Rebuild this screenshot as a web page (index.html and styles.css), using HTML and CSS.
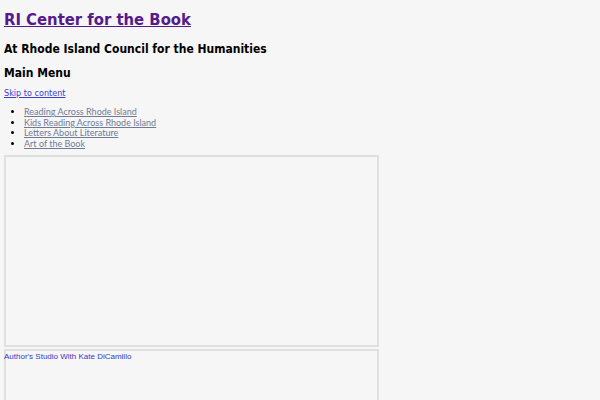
FILE: index.html
```html
<!DOCTYPE html>
<html>
<head>
<meta charset="utf-8">
<link rel="stylesheet" href="styles.css">
</head>
<body>
<header class="site-header">
  <h1 class="site-title"><a href="#">RI Center for the Book</a></h1>
  <h2 class="site-desc">At Rhode Island Council for the Humanities</h2>
</header>
<nav class="main-nav">
  <h2 class="menu-title">Main Menu</h2>
  <a class="skip" href="#content">Skip to content</a>
  <ul class="menu">
    <li><a href="#">Reading Across Rhode Island</a></li>
    <li><a href="#">Kids Reading Across Rhode Island</a></li>
    <li><a href="#">Letters About Literature</a></li>
    <li><a href="#">Art of the Book</a></li>
  </ul>
</nav>
<main id="content" class="content">
  <div class="frame frame-tall"></div>
  <div class="frame frame-second"><a class="frame-link" href="#">Author's Studio With Kate DiCamillo</a></div>
</main>
</body>
</html>
```
FILE: styles.css
```css
html { background: #f6f6f6; }
body {
  margin: 0;
  padding: 4px;
  background: #f6f6f6;
  font-family: "DejaVu Sans", sans-serif;
  font-stretch: condensed;
  color: #000;
}
.site-title {
  margin: 0;
  padding-top: 6px;
  font-size: 16.5px;
  line-height: 20px;
  font-weight: bold;
}
.site-title a { color: #551a8b; }
.site-desc {
  margin: 11px 0 0;
  font-size: 12px;
  line-height: 16px;
}
.menu-title {
  margin: 8px 0 0;
  font-size: 12px;
  line-height: 16px;
}
.skip {
  display: block;
  width: max-content;
  margin-top: 6px;
  font-size: 9px;
  line-height: 12px;
  color: #3b3bd6;
}
.menu {
  margin: 8px 0 0;
  padding-left: 20px;
  font-family: Lato, sans-serif;
  font-stretch: normal;
  font-size: 9px;
  line-height: 10.5px;
}
.menu a { color: #6f7b96; }
.content { margin-top: 6px; display: flex; flex-direction: column; gap: 2px; }
.frame {
  width: 371px;
  border: 2px solid #e0e0e0;
  background: #f6f6f6;
}
.frame-tall { height: 188px; }
.frame-second { height: 60px; }
.frame-link {
  display: block;
  font-family: "Liberation Sans", Arial, sans-serif;
  font-stretch: normal;
  font-size: 8px;
  line-height: 10px;
  color: #3636c8;
  text-decoration: none;
  margin: 1px 0 0 -2px;
}
```
